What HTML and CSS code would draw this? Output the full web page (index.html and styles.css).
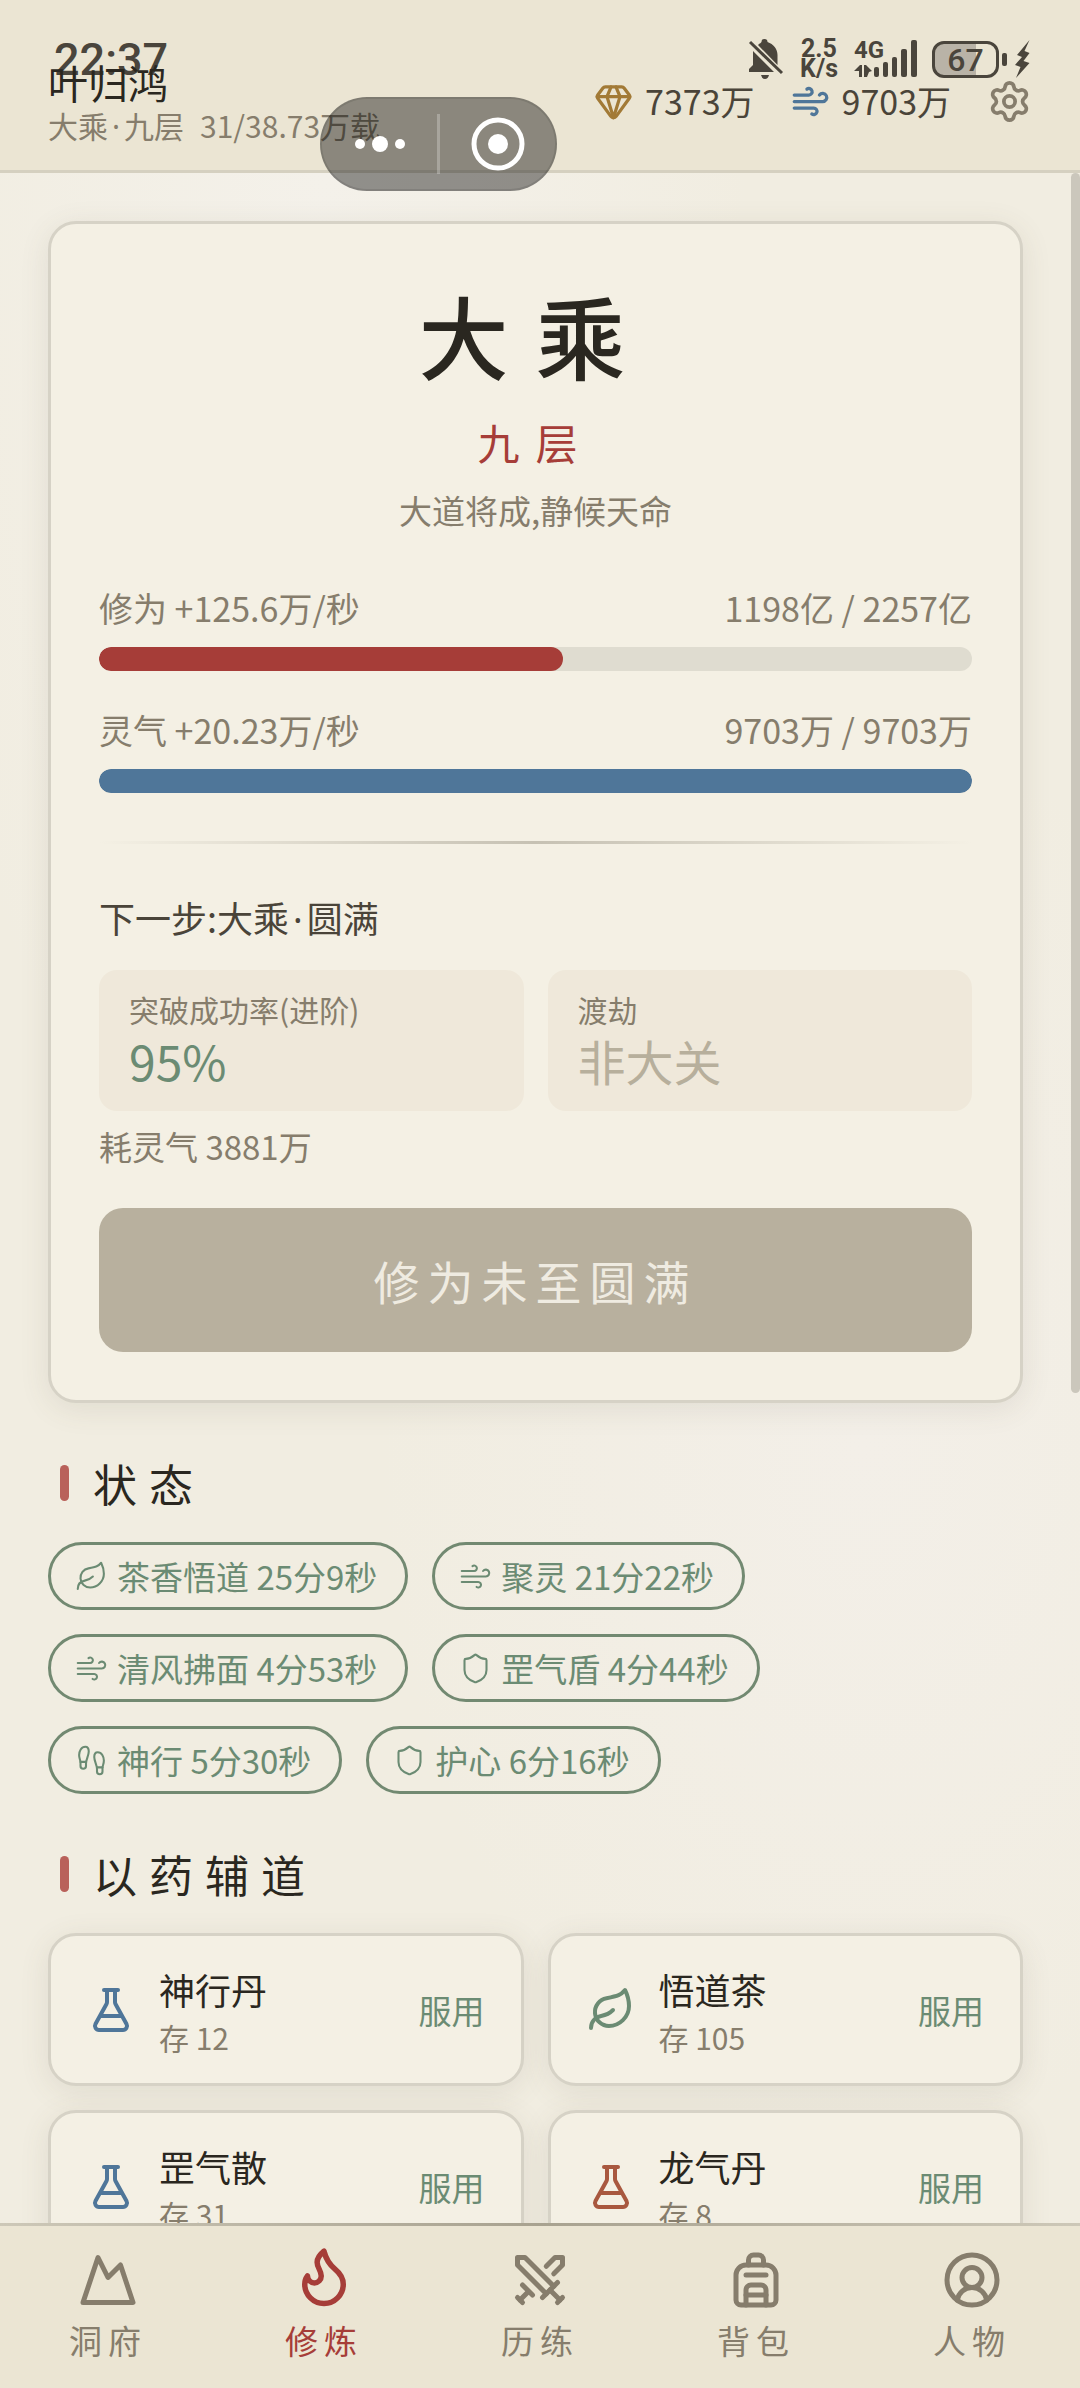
FILE: index.html
```html
<!DOCTYPE html>
<html lang="zh-CN">
<head>
<meta charset="utf-8">
<meta name="viewport" content="width=device-width, initial-scale=1">
<title>修炼</title>
<link rel="stylesheet" href="styles.css">
</head>
<body>
<svg class="sprite" aria-hidden="true">
  <symbol id="gem" viewBox="0 0 24 24"><path d="M10.5 3 8 9l4 13 4-13-2.5-6"/><path d="M17 3a2 2 0 0 1 1.6.8l3 4a2 2 0 0 1 .013 2.382l-7.99 10.986a2 2 0 0 1-3.247 0l-7.99-10.986A2 2 0 0 1 2.4 7.8l2.998-3.997A2 2 0 0 1 7 3z"/><path d="M2 9h20"/></symbol>
  <symbol id="wind" viewBox="0 0 24 24"><path d="M12.8 19.6A2 2 0 1 0 14 16H2"/><path d="M17.5 8a2.5 2.5 0 1 1 2 4H2"/><path d="M9.8 4.4A2 2 0 1 1 11 8H2"/></symbol>
  <symbol id="gear" viewBox="0 0 24 24"><path d="M9.671 4.136a2.34 2.34 0 0 1 4.659 0 2.34 2.34 0 0 0 3.319 1.915 2.34 2.34 0 0 1 2.33 4.033 2.34 2.34 0 0 0 0 3.831 2.34 2.34 0 0 1-2.33 4.033 2.34 2.34 0 0 0-3.319 1.915 2.34 2.34 0 0 1-4.659 0 2.34 2.34 0 0 0-3.32-1.915 2.34 2.34 0 0 1-2.33-4.033 2.34 2.34 0 0 0 0-3.831A2.34 2.34 0 0 1 6.35 6.051a2.34 2.34 0 0 0 3.319-1.915"/><circle cx="12" cy="12" r="3"/></symbol>
  <symbol id="leaf" viewBox="0 0 24 24"><path d="M11 20A7 7 0 0 1 9.8 6.1C15.5 5 17 4.48 19 2c1 2 2 4.18 2 8 0 5.5-4.78 10-10 10Z"/><path d="M2 21c0-3 1.85-5.36 5.08-6C9.5 14.52 12 13 13 12"/></symbol>
  <symbol id="shield" viewBox="0 0 24 24"><path d="M20 13c0 5-3.5 7.5-7.66 8.95a1 1 0 0 1-.67-.01C7.5 20.5 4 18 4 13V6a1 1 0 0 1 1-1c2 0 4.5-1.2 6.24-2.72a1.17 1.17 0 0 1 1.52 0C14.51 3.81 17 5 19 5a1 1 0 0 1 1 1z"/></symbol>
  <symbol id="footprints" viewBox="0 0 24 24"><path d="M4 16v-2.38C4 11.5 2.97 10.5 3 8c.03-2.72 1.49-6 4.5-6C9.37 2 10 3.8 10 5.5c0 3.11-2 5.66-2 8.68V16a2 2 0 1 1-4 0Z"/><path d="M20 20v-2.38c0-2.12 1.03-3.12 1-5.62-.03-2.72-1.49-6-4.5-6C14.63 6 14 7.8 14 9.5c0 3.11 2 5.66 2 8.68V20a2 2 0 1 0 4 0Z"/><path d="M16 17h4"/><path d="M4 13h4"/></symbol>
  <symbol id="flask" viewBox="0 0 24 24"><path d="M14 2v6a2 2 0 0 0 .245.96l5.51 10.08A2 2 0 0 1 18 22H6a2 2 0 0 1-1.755-2.96l5.51-10.08A2 2 0 0 0 10 8V2"/><path d="M7.2 15h9.6"/><path d="M8.5 2h7"/></symbol>
  <symbol id="mountain" viewBox="0 0 24 24"><path d="m8 3 4 8 5-5 5 15H2L8 3z"/></symbol>
  <symbol id="flame" viewBox="0 0 24 24"><path d="M12 3q1 4 4 6.5t3 5.5a1 1 0 0 1-14 0 5 5 0 0 1 1-3 1 1 0 0 0 5 0c0-2-1.5-3-1.5-5q0-2 2.5-4"/></symbol>
  <symbol id="swords" viewBox="0 0 24 24"><path d="M14.5 17.5 3 6V3h3l11.5 11.5"/><path d="m13 19 6-6"/><path d="m16 16 4 4"/><path d="m19 21 2-2"/><path d="M14.500 6.500 18 3h3v3l-3.500 3.500"/><path d="m5 14 4 4"/><path d="m7 17-3 3"/><path d="m3 19 2 2"/></symbol>
  <symbol id="backpack" viewBox="0 0 24 24"><path d="M4 10a4 4 0 0 1 4-4h8a4 4 0 0 1 4 4v10a2 2 0 0 1-2 2H6a2 2 0 0 1-2-2z"/><path d="M8 10h8"/><path d="M8 18h8"/><path d="M8 22v-6a2 2 0 0 1 2-2h4a2 2 0 0 1 2 2v6"/><path d="M9 6V4a2 2 0 0 1 2-2h2a2 2 0 0 1 2 2v2"/></symbol>
  <symbol id="person" viewBox="0 0 24 24"><path d="M17.925 20.056a6 6 0 0 0-11.851.001"/><circle cx="12" cy="11" r="4"/><circle cx="12" cy="12" r="10"/></symbol>
</svg>

<div class="app">
  <header class="topbar">
    <div class="status">
      <span class="clock">22:37</span>
      <div class="status-right">
        <svg class="bell" viewBox="0 0 36 42"><path d="M10 7C12 5 13 5 13.500 4a3 3 0 0 1 6 0c6 2 10 7 10 13v10z"/><path d="M5 13 26 34H1v-3l4-4z"/><path d="M13 37h8q-1 4-4 4t-4-4z"/><path class="slash" d="m2 4 32 31"/></svg>
        <span class="speed"><span>2.5</span><span>K/s</span></span>
        <span class="signal">
          <span class="network">4G</span>
          <svg viewBox="0 0 62 38"><path d="m0 31 6-6h2v12H5v-6zM10 25h2l6 6-3 1-2 5h-3z"/><rect x="20" y="27" width="5" height="10" rx="2"/><rect x="29" y="22" width="5" height="15" rx="2"/><rect x="38" y="17" width="5" height="20" rx="2"/><rect x="47" y="9" width="6" height="28" rx="2"/><rect x="57" y="0" width="6" height="37" rx="2"/></svg>
        </span>
        <span class="battery">67</span>
        <svg class="bolt" viewBox="0 0 15 38"><path d="M14.500 0 2 15l5 2-7 8 5.500 2L1 38l13.500-15L8.500 21l6-8L9.500 11z"/></svg>
      </div>
    </div>
    <div class="who">
      <h1 class="name">叶归鸿</h1>
      <p class="rank"><span>大乘<span class="dot">·</span>九层</span><span>31/38.73万载</span></p>
    </div>
    <div class="wealth">
      <span class="res"><svg class="icon gold"><use href="#gem"/></svg>7373万</span>
      <span class="res"><svg class="icon blue"><use href="#wind"/></svg>9703万</span>
      <button class="gear" aria-label="设置"><svg class="icon"><use href="#gear"/></svg></button>
    </div>
    <div class="capsule">
      <button aria-label="更多"><svg viewBox="0 0 50 20"><circle cx="5" cy="10" r="5"/><circle cx="25" cy="10" r="8"/><circle cx="45" cy="10" r="5"/></svg></button>
      <button aria-label="关闭"><svg class="target" viewBox="0 0 54 54"><circle class="ring" cx="27" cy="27" r="24"/><circle cx="27" cy="27" r="10"/></svg></button>
    </div>
  </header>

  <div class="body">
    <main class="content">
      <section class="card realm">
        <h2 class="realm-name">大乘</h2>
        <p class="realm-tier">九层</p>
        <p class="realm-desc">大道将成,静候天命</p>
        <div class="stats">
          <div class="stat">
            <div class="stat-row"><span>修为 +125.6万/秒</span><span>1198亿 / 2257亿</span></div>
            <div class="track"><div class="fill red-fill" style="width:53.1%"></div></div>
          </div>
          <div class="stat">
            <div class="stat-row"><span>灵气 +20.23万/秒</span><span>9703万 / 9703万</span></div>
            <div class="track"><div class="fill blue-fill" style="width:100%"></div></div>
          </div>
        </div>
        <hr class="divider">
        <p class="next">下一步:大乘<span class="dot">·</span>圆满</p>
        <div class="boxes">
          <div class="box"><span class="box-label">突破成功率(进阶)</span><span class="box-value good">95%</span></div>
          <div class="box"><span class="box-label">渡劫</span><span class="box-value none">非大关</span></div>
        </div>
        <p class="cost">耗灵气 3881万</p>
        <button class="advance" disabled>修为未至圆满</button>
      </section>

      <h2 class="section-title">状态</h2>
      <ul class="pills">
        <li class="pill"><svg class="icon"><use href="#leaf"/></svg>茶香悟道 25分9秒</li>
        <li class="pill"><svg class="icon"><use href="#wind"/></svg>聚灵 21分22秒</li>
        <li class="pill"><svg class="icon"><use href="#wind"/></svg>清风拂面 4分53秒</li>
        <li class="pill"><svg class="icon"><use href="#shield"/></svg>罡气盾 4分44秒</li>
        <li class="pill"><svg class="icon"><use href="#footprints"/></svg>神行 5分30秒</li>
        <li class="pill"><svg class="icon"><use href="#shield"/></svg>护心 6分16秒</li>
      </ul>

      <h2 class="section-title">以药辅道</h2>
      <div class="meds">
        <div class="card med"><svg class="icon blue"><use href="#flask"/></svg><div class="med-text"><h3>神行丹</h3><p>存 12</p></div><button class="take">服用</button></div>
        <div class="card med"><svg class="icon green"><use href="#leaf"/></svg><div class="med-text"><h3>悟道茶</h3><p>存 105</p></div><button class="take">服用</button></div>
        <div class="card med"><svg class="icon blue"><use href="#flask"/></svg><div class="med-text"><h3>罡气散</h3><p>存 31</p></div><button class="take">服用</button></div>
        <div class="card med"><svg class="icon rust"><use href="#flask"/></svg><div class="med-text"><h3>龙气丹</h3><p>存 8</p></div><button class="take">服用</button></div>
      </div>
    </main>
    <div class="rail"><div class="thumb"></div></div>
  </div>

  <nav class="tabs">
    <a href="#cave"><svg class="icon"><use href="#mountain"/></svg><span>洞府</span></a>
    <a href="#train" class="active" aria-current="page"><svg class="icon"><use href="#flame"/></svg><span>修炼</span></a>
    <a href="#quest"><svg class="icon"><use href="#swords"/></svg><span>历练</span></a>
    <a href="#bag"><svg class="icon"><use href="#backpack"/></svg><span>背包</span></a>
    <a href="#self"><svg class="icon"><use href="#person"/></svg><span>人物</span></a>
  </nav>
</div>
</body>
</html>
```
FILE: styles.css
```css
:root {
  --ink: #2a2720;
  --ink-soft: #4a4439;
  --muted: #867d6c;
  --faint: #b7af9c;
  --red: #a63d38;
  --blue: #4f7699;
  --green: #6b8b73;
  --line: #d6d2c6;
  --bar: #ebe5d3;
}

* { box-sizing: border-box; margin: 0; padding: 0; }

body {
  font-family: "Noto Sans CJK SC", "Noto Sans", sans-serif;
  color: var(--ink);
  background: #f1ede1;
}

h1, h2, h3 { font-weight: 400; }
ul { list-style: none; }
button { font: inherit; color: inherit; background: none; border: 0; }
svg { display: block; flex: none; fill: currentColor; }
.sprite { position: absolute; width: 0; height: 0; }

.icon {
  fill: none;
  stroke: currentColor;
  stroke-width: 2;
  stroke-linecap: round;
  stroke-linejoin: round;
}

.gold { color: #a27a36; }
.blue { color: var(--blue); }
.green { color: var(--green); }
.rust { color: #a8583f; }
.dot { margin: 0 4px; font-family: "Noto Sans", sans-serif; line-height: 1; }

.app { display: flex; flex-direction: column; height: 100vh; }

/* top bar */
.topbar {
  position: relative;
  display: flex;
  justify-content: space-between;
  align-items: center;
  padding: 58px 48px 26px;
  background: var(--bar);
  border-bottom: 3px solid #d5d0c0;
}

.who { position: relative; }
.name { font-size: 40px; line-height: 48px; }
.rank { display: flex; gap: 16px; font-size: 30px; line-height: 38px; color: var(--muted); }

.wealth { display: flex; align-items: center; gap: 36px; color: var(--ink-soft); }
.res { display: flex; align-items: center; gap: 12px; font-size: 34px; line-height: 48px; }
.res .icon { width: 39px; height: 39px; }
.gear { color: var(--muted); }
.gear .icon { width: 45px; height: 45px; }

/* system status strip floats over the top bar */
.status {
  position: absolute;
  inset: 0 0 auto;
  display: flex;
  justify-content: space-between;
  align-items: center;
  height: 118px;
  padding: 0 50px 0 54px;
  font-family: Roboto, "Noto Sans", sans-serif;
  color: #4a453c;
}
.clock { font-size: 45px; font-weight: 500; }
.status-right { display: flex; align-items: center; gap: 16px; }
.bell { width: 36px; height: 42px; }
.slash { stroke: currentColor; stroke-width: 3; }
.speed { display: flex; flex-direction: column; align-items: center; font-size: 25px; line-height: 20px; font-weight: 700; }
.signal { position: relative; }
.signal svg { width: 62px; height: 38px; overflow: visible; }
.network { position: absolute; top: -2px; left: 0; font-size: 24px; line-height: 24px; font-weight: 700; }
.battery {
  position: relative;
  width: 67px;
  height: 37px;
  border: 3px solid currentColor;
  border-radius: 12px;
  background: linear-gradient(90deg, #b9b3a7 67%, transparent 67%);
  font-size: 32px;
  line-height: 32px;
  font-weight: 500;
  text-align: center;
}
.battery::after {
  content: "";
  position: absolute;
  top: 9px;
  right: -11px;
  width: 5px;
  height: 13px;
  border-radius: 2px;
  background: currentColor;
}
.bolt { width: 15px; height: 38px; }

/* host app capsule floats over the page */
.capsule {
  position: absolute;
  z-index: 2;
  top: 97px;
  left: 320px;
  display: flex;
  align-items: center;
  width: 237px;
  height: 94px;
  border: 2px solid #0000001a;
  border-radius: 47px;
  background: #00000068;
  color: #fff;
}
.capsule button { flex: 1; display: grid; place-items: center; height: 60px; }
.capsule button + button { border-left: 3px solid #ffffff40; }
.capsule svg { width: 50px; height: 20px; }
.capsule .target { width: 54px; height: 54px; }
.ring { fill: none; stroke: currentColor; stroke-width: 5; }

/* scrolling area */
.body {
  flex: 1;
  min-height: 0;
  display: flex;
  background:
    radial-gradient(ellipse at 80% 62%, #f3efe8, transparent 40%),
    radial-gradient(ellipse at 30% 0, #f4f1ea, transparent 40%);
}
.content { flex: 1; overflow-y: auto; scrollbar-width: none; padding: 48px; }
.rail { width: 9px; }
.thumb { height: 59.5%; border-radius: 5px; background: #cbc7bc; }

.card {
  border: 3px solid var(--line);
  border-radius: 28px;
  background: #f4f0e4;
  box-shadow: 0 6px 30px #5a503c1c;
}

.realm { padding: 44px 48px 48px; }
.realm-name { font-size: 90px; line-height: 132px; font-weight: 500; letter-spacing: 27px; text-align: center; }
.realm-tier { margin-top: 12px; font-size: 42px; line-height: 60px; letter-spacing: 16px; text-align: center; color: var(--red); }
.realm-desc { margin-top: 14px; font-size: 33px; line-height: 48px; text-align: center; color: var(--muted); }

.stats { display: grid; gap: 35px; margin-top: 50px; }
.stat-row { display: flex; justify-content: space-between; font-size: 34px; line-height: 48px; color: var(--muted); }
.track { height: 24px; margin-top: 15px; border-radius: 12px; background: #dfdcd0; overflow: hidden; }
.fill { height: 100%; border-radius: 12px; }
.red-fill { background: var(--red); }
.blue-fill { background: var(--blue); }

.divider { height: 3px; margin: 48px 0 46px; border: 0; background: linear-gradient(90deg, transparent, #c6c1b3, transparent); }
.next { font-size: 36px; line-height: 54px; color: var(--ink-soft); }

.boxes { display: grid; grid-template-columns: 1fr 1fr; gap: 24px; margin-top: 26px; }
.box { padding: 18px 30px 21px; border-radius: 18px; background: #efe8da; }
.box-label { display: block; font-size: 30px; line-height: 42px; color: var(--muted); }
.box-value { display: block; font-size: 48px; line-height: 60px; }
.good { color: var(--green); }
.none { color: var(--faint); }
.cost { margin-top: 11px; font-size: 33px; line-height: 48px; color: var(--muted); }

.advance {
  display: block;
  width: 100%;
  margin-top: 38px;
  padding: 36px 0;
  border-radius: 24px;
  background: #b8b09e;
  color: #efebe1;
  font-size: 46px;
  line-height: 72px;
  letter-spacing: 8px;
}

.section-title {
  display: flex;
  align-items: center;
  gap: 24px;
  margin: 50px 0 29px;
  padding-left: 12px;
  font-size: 44px;
  line-height: 60px;
  letter-spacing: 12px;
}
.section-title::before { content: ""; width: 9px; height: 36px; border-radius: 5px; background: #b9615a; }

.pills { display: flex; flex-wrap: wrap; gap: 24px; }
.pill {
  display: flex;
  align-items: center;
  gap: 9px;
  padding: 6px 28px 6px 24px;
  border: 3px solid #728971;
  border-radius: 34px;
  font-size: 33px;
  line-height: 50px;
  color: var(--green);
}
.pill .icon { width: 33px; height: 33px; stroke-width: 1.5; }

.meds { display: grid; grid-template-columns: 1fr 1fr; gap: 24px; }
.med { display: flex; align-items: center; gap: 24px; min-height: 153px; padding: 24px 36px; }
.med .icon { width: 48px; height: 48px; }
.med-text { flex: 1; }
.med h3 { font-size: 36px; line-height: 54px; }
.med p { font-size: 30px; line-height: 42px; color: var(--muted); }
.take { font-size: 33px; line-height: 48px; color: var(--green); }

/* bottom tabs */
.tabs {
  display: grid;
  grid-template-columns: repeat(5, 1fr);
  padding: 24px 0;
  border-top: 3px solid;
  border-image: linear-gradient(90deg, #cdc8b8, #a8a290, #cdc8b8) 1;
  background: var(--bar);
}
.tabs a { display: flex; flex-direction: column; align-items: center; gap: 6px; color: var(--muted); text-decoration: none; }
.tabs .icon { width: 60px; height: 60px; }
.tabs span { font-size: 33px; line-height: 48px; letter-spacing: 6px; }
.tabs .active { color: var(--red); }
.active .icon { transform: translateY(-4px) scale(1.1); }
```
